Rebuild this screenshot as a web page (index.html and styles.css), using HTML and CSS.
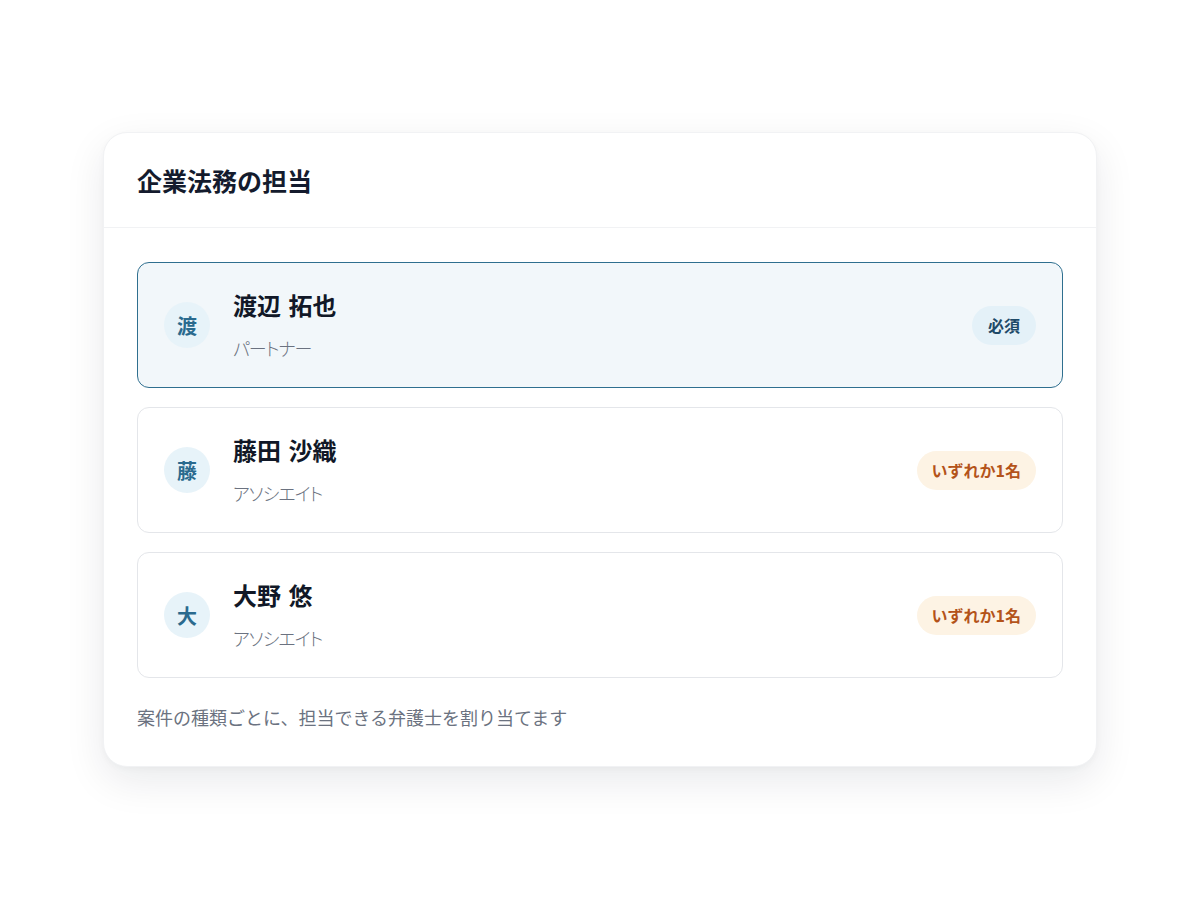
FILE: index.html
```html
<!DOCTYPE html>
<html lang="ja">
	<head>
		<meta charset="UTF-8">
		<title>企業法務の担当</title>
		<link rel="stylesheet" href="styles.css">
	</head>
	<body>
		<div class="panel">
			<div class="panel-head">
				<h2>企業法務の担当</h2>
			</div>

			<div class="panel-body">
				<ul class="lawyers">
					<li class="lawyer selected">
						<span class="avatar">渡</span>
						<div class="info">
							<p class="name">渡辺 拓也</p>
							<p class="role">パートナー</p>
						</div>
						<span class="tag tag-must">必須</span>
					</li>
					<li class="lawyer">
						<span class="avatar">藤</span>
						<div class="info">
							<p class="name">藤田 沙織</p>
							<p class="role">アソシエイト</p>
						</div>
						<span class="tag tag-any">いずれか1名</span>
					</li>
					<li class="lawyer">
						<span class="avatar">大</span>
						<div class="info">
							<p class="name">大野 悠</p>
							<p class="role">アソシエイト</p>
						</div>
						<span class="tag tag-any">いずれか1名</span>
					</li>
				</ul>

				<p class="note">案件の種類ごとに、担当できる弁護士を割り当てます</p>
			</div>
		</div>
	</body>
</html>
```

FILE: styles.css
```css
*{
	margin: 0;
	padding: 0;
	box-sizing: border-box;
}

ul{
	list-style: none;
}

html, body{
	background: #ffffff;
}

body{
	min-height: 100vh;
	font-family: "Noto Sans CJK JP", "Noto Sans", sans-serif;
	color: #111827;
	padding: 132px 103px 100px;
}

/* 外枠のカード */
.panel{
	width: 994px;
	background: #ffffff;
	border: 1px solid #f1f2f4;
	border-radius: 24px;
	box-shadow: 0 14px 40px rgba(15, 23, 42, 0.09), 0 2px 6px rgba(15, 23, 42, 0.03);
}

.panel-head{
	height: 95px;
	padding: 0 33px;
	display: flex;
	align-items: center;
	border-bottom: 1px solid #f1f2f4;
}

.panel-head h2{
	font-size: 25px;
	font-weight: 700;
	color: #141b2d;
}

.panel-body{
	padding: 34px 33px 36px 33px;
}

/* 弁護士リスト */
.lawyers{
	display: flex;
	flex-direction: column;
	gap: 19px;
}

.lawyer{
	height: 126px;
	display: flex;
	align-items: center;
	padding: 0 26px;
	border: 1px solid #e4e6ea;
	border-radius: 12px;
	background: #ffffff;
}

.lawyer.selected{
	background: #f2f7fa;
	border-color: #2f6f8f;
}

.avatar{
	width: 46px;
	height: 46px;
	border-radius: 50%;
	background: #e7f3f9;
	color: #2a6a8e;
	font-size: 20px;
	font-weight: 700;
	display: flex;
	align-items: center;
	justify-content: center;
	flex-shrink: 0;
}

.info{
	margin-left: 23px;
	flex: 1;
	display: flex;
	flex-direction: column;
	gap: 14px;
}

.name{
	font-size: 24px;
	font-weight: 700;
	line-height: 32px;
	color: #111827;
	word-spacing: 2px;
}

.role{
	font-size: 18px;
	font-weight: 300;
	line-height: 26px;
	color: #6b7280;
	letter-spacing: -1px;
	font-feature-settings: "palt";
}

/* ラベル */
.tag{
	height: 39px;
	padding: 0 16px;
	border-radius: 20px;
	display: flex;
	align-items: center;
	font-size: 16px;
	font-weight: 700;
}

.tag-must{
	background: #e4f1f8;
	color: #1f4a68;
}

.tag-any{
	background: #fdf3e4;
	color: #b4531a;
	padding: 0 15px;
}

.note{
	margin-top: 26px;
	font-size: 18px;
	line-height: 26px;
	color: #6b7280;
}
```
